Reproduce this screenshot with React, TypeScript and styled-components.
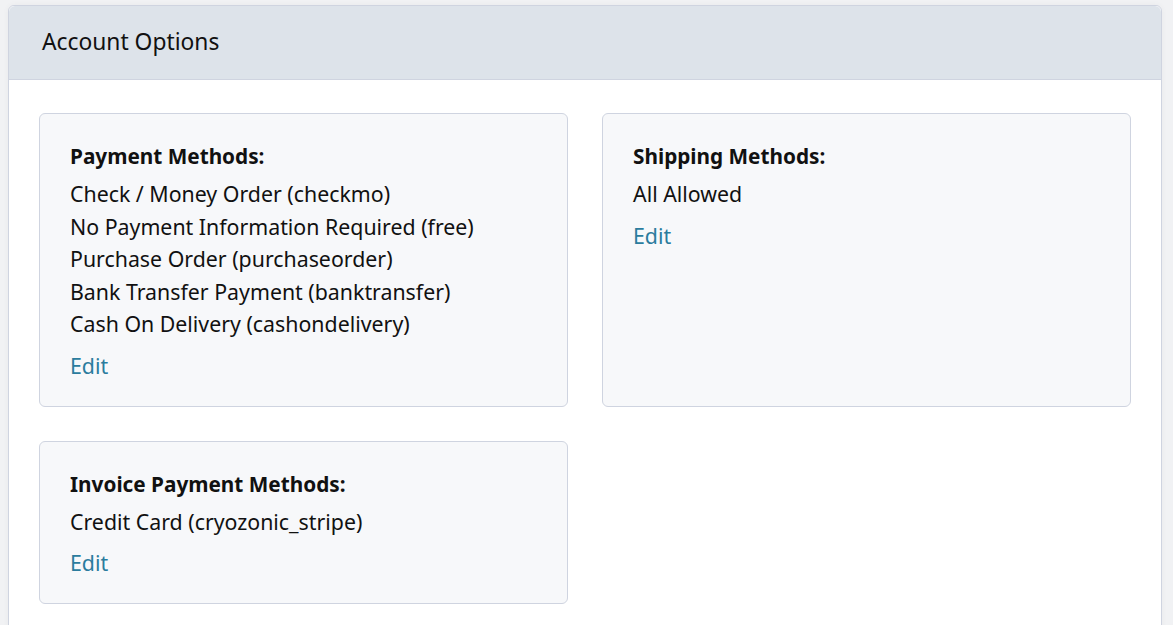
import styled, { createGlobalStyle } from 'styled-components';

const GlobalStyle = createGlobalStyle`
  html, body {
    margin: 0;
    padding: 0;
    background: #f1f2f4;
  }
  body {
    font-family: "Noto Sans", "Open Sans", sans-serif;
    color: #111;
  }
`;

interface OptionCard {
  title: string;
  items: string[];
}

const cards: OptionCard[] = [
  {
    title: 'Payment Methods:',
    items: [
      'Check / Money Order (checkmo)',
      'No Payment Information Required (free)',
      'Purchase Order (purchaseorder)',
      'Bank Transfer Payment (banktransfer)',
      'Cash On Delivery (cashondelivery)',
    ],
  },
  { title: 'Shipping Methods:', items: ['All Allowed'] },
  { title: 'Invoice Payment Methods:', items: ['Credit Card (cryozonic_stripe)'] },
];

export default function App() {
  return (
    <>
      <GlobalStyle />
      <Page>
        <Panel>
          <Header>Account Options</Header>
          <Body>
            {cards.map((card) => (
              <Card key={card.title}>
                <CardTitle>{card.title}</CardTitle>
                <List>
                  {card.items.map((item) => (
                    <Item key={item}>{item}</Item>
                  ))}
                </List>
                <EditLink href="#">Edit</EditLink>
              </Card>
            ))}
          </Body>
        </Panel>
      </Page>
    </>
  );
}

const Page = styled.div`
  padding: 5px 11px 0 8px;
  height: 620px;
  overflow: hidden;
`;

const Panel = styled.section`
  background: #ffffff;
  border: 1px solid #cfd4e0;
  border-radius: 6px;
  box-shadow: 0 0 6px rgba(0, 0, 0, 0.04);
  min-height: 700px;
`;

const Header = styled.div`
  height: 74px;
  display: flex;
  align-items: center;
  padding: 0 33px 3px;
  box-sizing: border-box;
  background: #dde3ea;
  border-bottom: 1px solid #cfd4e0;
  border-radius: 6px 6px 0 0;
  font-size: 22.8px;
  color: #111;
`;

const Body = styled.div`
  display: grid;
  grid-template-columns: 1fr 1fr;
  gap: 34px;
  padding: 33px 30px;
`;

const Card = styled.div`
  background: #f7f8fa;
  border: 1px solid #cfd4e0;
  border-radius: 6px;
  padding: 27px 30px 24px;
`;

const CardTitle = styled.div`
  font-size: 20.75px;
  font-weight: 700;
  line-height: 30px;
  margin-bottom: 7px;
`;

const List = styled.div`
  display: flex;
  flex-direction: column;
`;

const Item = styled.div`
  font-size: 21.33px;
  line-height: 32.5px;
`;

const EditLink = styled.a`
  display: block;
  margin-top: 9px;
  font-size: 21.33px;
  line-height: 32px;
  color: #2b7c9e;
  text-decoration: none;
`;
